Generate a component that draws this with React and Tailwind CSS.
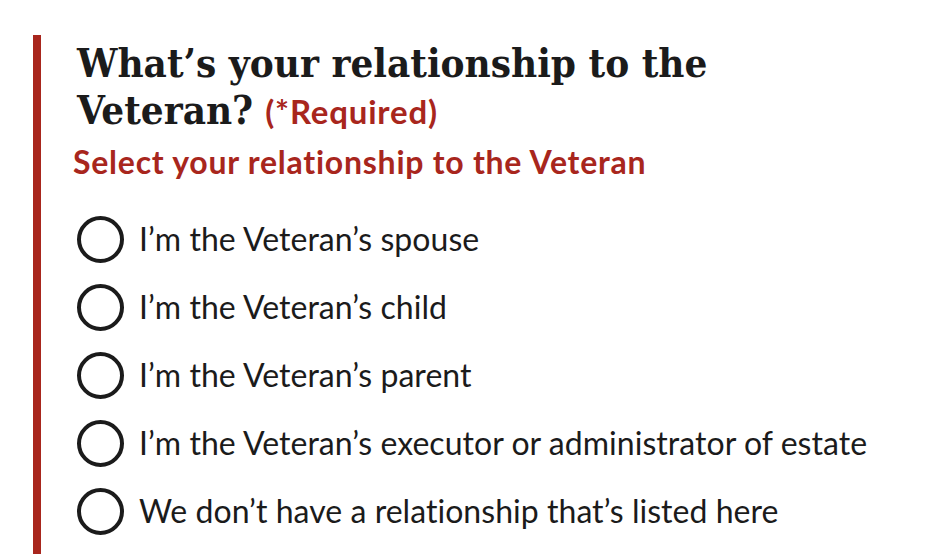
const options = [
  "I’m the Veteran’s spouse",
  "I’m the Veteran’s child",
  "I’m the Veteran’s parent",
  "I’m the Veteran’s executor or administrator of estate",
  "We don’t have a relationship that’s listed here",
];

function RadioOption({ label }) {
  return (
    <label className="flex h-[40px] items-center gap-[15px] cursor-pointer">
      <span className="flex-shrink-0 w-[47px] h-[47px] rounded-full border-[4px] border-[#1b1b1b] bg-white"></span>
      <span className="font-['Lato',sans-serif] text-[32px] leading-[40px] tracking-[0.04px] text-[#1b1b1b]">{label}</span>
    </label>
  );
}

export default function App() {
  return (
    <div className="min-h-screen w-full bg-white overflow-hidden pl-[33px] pt-[35px]">
      <fieldset className="border-l-[8px] border-[#a8261d] pl-[36px] pt-[4px] pb-[40px]">
        <h2 className="w-[660px] font-['DejaVu_Serif_Condensed','DejaVu_Serif',serif] font-bold text-[40px] leading-[47px] text-[#1b1b1b]">
          What’s your relationship to the Veteran?
          <span className="ml-[12px] font-['Lato',sans-serif] font-bold text-[33px] tracking-[0.8px] text-[#a8261d]">(*Required)</span>
        </h2>

        <p className="mt-[7px] -ml-[4px] font-['Lato',sans-serif] font-bold text-[32px] leading-[40px] tracking-[0.75px] text-[#a8261d]">
          Select your relationship to the Veteran
        </p>

        <div className="mt-[37px] flex flex-col gap-[28px]">
          {options.map((opt) => (
            <RadioOption key={opt} label={opt} />
          ))}
        </div>
      </fieldset>
    </div>
  );
}
